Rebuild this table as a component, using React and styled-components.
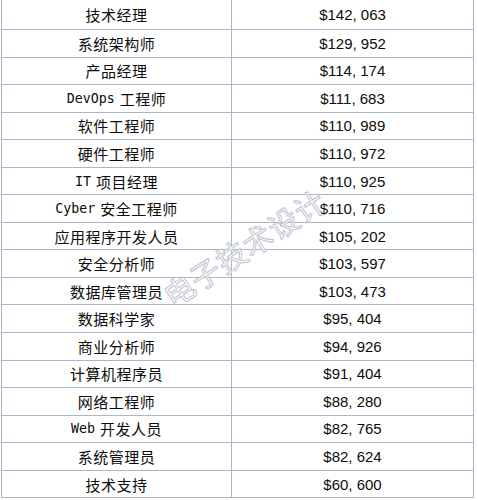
import styled, { createGlobalStyle } from "styled-components";

const GlobalStyle = createGlobalStyle`
  html, body {
    margin: 0;
    padding: 0;
    background: #ffffff;
  }
  body {
    width: 478px;
    height: 500px;
    overflow: hidden;
  }
`;

const salaries = [
  ["技术经理", "$142, 063"],
  ["系统架构师", "$129, 952"],
  ["产品经理", "$114, 174"],
  ["DevOps 工程师", "$111, 683"],
  ["软件工程师", "$110, 989"],
  ["硬件工程师", "$110, 972"],
  ["IT 项目经理", "$110, 925"],
  ["Cyber 安全工程师", "$110, 716"],
  ["应用程序开发人员", "$105, 202"],
  ["安全分析师", "$103, 597"],
  ["数据库管理员", "$103, 473"],
  ["数据科学家", "$95, 404"],
  ["商业分析师", "$94, 926"],
  ["计算机程序员", "$91, 404"],
  ["网络工程师", "$88, 280"],
  ["Web 开发人员", "$82, 765"],
  ["系统管理员", "$82, 624"],
  ["技术支持", "$60, 600"],
];

// latin words get their own narrower font, the rest stays CJK
const renderJob = (job) =>
  job
    .split(/([A-Za-z]+)/)
    .filter(Boolean)
    .map((part, i) =>
      /^[A-Za-z]+$/.test(part) ? <Latin key={i}>{part}</Latin> : part
    );

const App = () => {
  return (
    <Page>
      <GlobalStyle />
      <Table>
        {salaries.map(([job, pay], i) => (
          <Row key={job} $tall={i === 0}>
            <JobCell>{renderJob(job)}</JobCell>
            <PayCell>{pay}</PayCell>
          </Row>
        ))}
      </Table>
      <Watermark>电子技术设计</Watermark>
    </Page>
  );
};
export default App;

const Page = styled.div`
  position: relative;
  width: 478px;
  height: 500px;
  overflow: hidden;
`;

const Table = styled.div`
  display: flex;
  flex-direction: column;
  margin-left: 1px;
  width: 471px;
  border-left: 1px solid #aab4cc;
  border-right: 1px solid #aab4cc;
`;

const Row = styled.div`
  display: grid;
  grid-template-columns: 230px 1fr;
  box-sizing: border-box;
  height: ${(p) => (p.$tall ? "30px" : "27.56px")};
  border-bottom: 1px solid #aab4cc;
`;

const JobCell = styled.div`
  display: flex;
  align-items: center;
  justify-content: center;
  white-space: pre;
  border-right: 1px solid #aab4cc;
  font-family: "Noto Sans CJK SC", sans-serif;
  font-size: 15px;
  letter-spacing: 0.5px;
  color: #0c0c0c;
`;

const Latin = styled.span`
  font-family: "DejaVu Sans Mono", "Liberation Mono", monospace;
  font-size: 13.3px;
  letter-spacing: 0;
  margin-right: 1px;
`;

const PayCell = styled.div`
  display: flex;
  align-items: center;
  justify-content: center;
  font-family: "Liberation Sans", Arial, sans-serif;
  font-size: 15px;
  color: #0c0c0c;
`;

const Watermark = styled.span`
  position: absolute;
  left: 244px;
  top: 247px;
  transform: translate(-50%, -50%) rotate(-33deg);
  white-space: nowrap;
  font-family: "Noto Sans CJK SC", sans-serif;
  font-size: 30px;
  font-weight: 400;
  letter-spacing: 1px;
  color: rgba(255, 255, 255, 0.85);
  -webkit-text-stroke: 1px #bfc4ce;
  pointer-events: none;
`;
